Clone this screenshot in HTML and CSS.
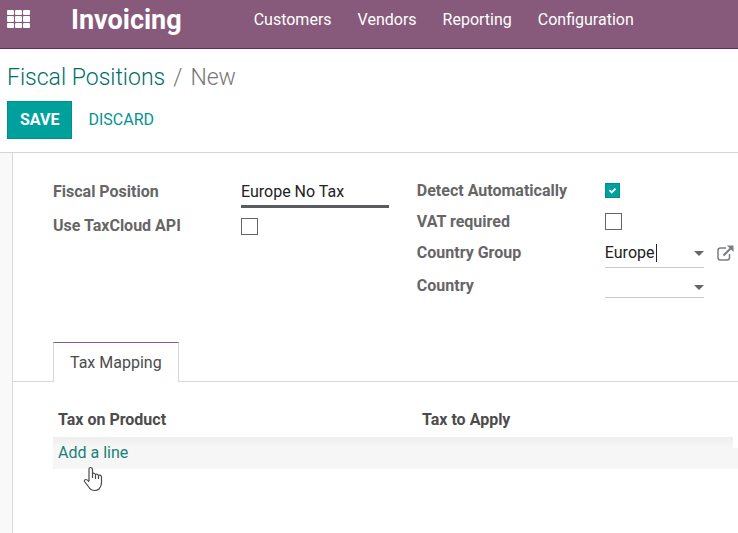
FILE: index.html
```
<!DOCTYPE html>
<html lang="en">
<head>
<meta charset="utf-8">
<title>Invoicing - Fiscal Positions</title>
<link rel="stylesheet" href="styles.css">
</head>
<body>
<header class="navbar">
  <button class="apps" type="button" aria-label="Applications">
    <svg width="24" height="20" viewBox="0 0 24 20" fill="currentColor">
      <rect x="0" y="0" width="7" height="5" rx="1"/><rect x="8" y="0" width="7" height="5" rx="1"/><rect x="16" y="0" width="7" height="5" rx="1"/>
      <rect x="0" y="6" width="7" height="6" rx="1"/><rect x="8" y="6" width="7" height="6" rx="1"/><rect x="16" y="6" width="7" height="6" rx="1"/>
      <rect x="0" y="13" width="7" height="5" rx="1"/><rect x="8" y="13" width="7" height="5" rx="1"/><rect x="16" y="13" width="7" height="5" rx="1"/>
    </svg>
  </button>
  <a class="brand" href="#">Invoicing</a>
  <nav class="menu">
    <a href="#">Customers</a>
    <a href="#">Vendors</a>
    <a href="#">Reporting</a>
    <a href="#">Configuration</a>
  </nav>
</header>
<section class="control-panel">
  <div class="breadcrumb"><a href="#">Fiscal Positions</a><span class="slash">/</span><span class="current">New</span></div>
  <div class="actions">
    <button class="btn save" type="button">SAVE</button>
    <button class="btn discard" type="button">DISCARD</button>
  </div>
</section>
<main class="content">
  <div class="sheet">
    <form class="groups">
      <div class="group">
        <div class="row">
          <label for="name">Fiscal Position</label>
          <input class="text" id="name" type="text" value="Europe No Tax">
        </div>
        <div class="row last">
          <label for="taxcloud">Use TaxCloud API</label>
          <input class="check" id="taxcloud" type="checkbox">
        </div>
      </div>
      <div class="group">
        <div class="row">
          <label for="auto">Detect Automatically</label>
          <span class="checked"><input class="check" id="auto" type="checkbox" checked><svg class="tick" width="15" height="15" viewBox="0 0 15 15"><path d="M4.500 7.200l2.200 2.200 3.800-3.800" fill="none" stroke="#fff" stroke-width="1.800"/></svg></span>
        </div>
        <div class="row">
          <label for="vat">VAT required</label>
          <input class="check" id="vat" type="checkbox">
        </div>
        <div class="row">
          <label for="cgroup">Country Group</label>
          <div class="field">
            <div class="combo">
              <select id="cgroup"><option>Europe</option></select>
              <span class="caret"></span>
              <svg class="arrow" width="10" height="5" viewBox="0 0 10 5"><path d="M0 0h10L5 5z" fill="#666"/></svg>
            </div>
            <a class="external" href="#" aria-label="Open country group">
              <svg width="17" height="16" viewBox="0 0 17 16" fill="none" stroke="#7a7f83">
                <path d="M9 3H3.500Q1 3 1 5.500V12.500Q1 15 3.500 15H10Q12.500 15 12.500 12.500V9" stroke-width="1.500"/>
                <path d="M6.500 10.500L14 3" stroke-width="2.200"/>
                <path d="M10 0.500h6.500V7z" fill="#7a7f83" stroke="none"/>
              </svg>
            </a>
          </div>
        </div>
        <div class="row last">
          <label for="country">Country</label>
          <div class="field">
            <div class="combo short">
              <select id="country"><option></option></select>
              <svg class="arrow" width="10" height="5" viewBox="0 0 10 5"><path d="M0 0h10L5 5z" fill="#666"/></svg>
            </div>
          </div>
        </div>
      </div>
    </form>
    <div class="tabs"><button class="tab" type="button">Tax Mapping</button></div>
    <div class="page">
      <table class="lines">
        <thead><tr><th>Tax on Product</th><th>Tax to Apply</th></tr></thead>
        <tbody><tr><td colspan="2"><a href="#">Add a line</a></td></tr></tbody>
      </table>
      <svg class="pointer" width="20" height="26" viewBox="0 0 20 26"><path d="M6 15V3.500Q6 1.500 7.500 1.500T9.500 3.500V10V7.500Q11 6.500 12.500 8.500Q14.500 7.500 15.500 9.500Q18 8.500 18.500 11V17Q18.500 20 16 23Q14.500 24.500 11.500 24.500Q8 24.500 6.500 22L1.500 15.500Q1 13.500 3 13.500Q4.500 13.500 6 16M9.500 8V12M12.500 8.500V13M15.500 9.500V13" fill="#fff" stroke="#4a4a4a" stroke-width="1.200" stroke-linejoin="round"/></svg>
    </div>
  </div>
</main>
</body>
</html>
```
FILE: styles.css
```
* { box-sizing: border-box; }
body {
  margin: 0;
  min-height: 100vh;
  display: flex;
  flex-direction: column;
  background: #fff;
  color: #4c4c4c;
  font: 16px/20px Roboto, sans-serif;
}
a { color: inherit; text-decoration: none; }
button, input, select { font: inherit; color: inherit; margin: 0; padding: 0; }

.navbar {
  display: flex;
  align-items: center;
  height: 49px;
  padding: 0 7px 8px;
  background: #875a7b;
  border-bottom: 1px solid #5f2f55;
  color: #fff;
}
.apps { display: flex; width: 24px; border: 0; background: none; color: #fff; }
.brand { margin-left: 40px; font-size: 27px; line-height: 32px; font-weight: 700; }
.menu { display: flex; gap: 26px; margin-left: 72px; }

.control-panel { padding: 15px 7px 13px; border-bottom: 1px solid #d5d5d5; }
.breadcrumb { font-size: 23px; line-height: 28px; color: #777; font-weight: 300; }
.breadcrumb a { color: #006f6c; }
.slash { margin: 0 8px; }
.current { color: #777; }
.actions { display: flex; gap: 3px; margin-top: 9px; }
.btn { height: 38px; padding: 0 12px; border: 1px solid transparent; background: none; }
.save { background: #00a09d; border-color: #008f8c; color: #fff; font-weight: 700; }
.discard { color: #009591; }

.content { flex: 1; display: flex; padding-left: 12px; background: #f9f9f9; }
.sheet { flex: 1; background: #fff; border-left: 1px solid #d5d9d9; }
.groups {
  display: grid;
  grid-template-columns: 18fr 17fr;
  gap: 28px;
  padding: 22px 4px 0 40px;
}
.row { display: grid; grid-template-columns: 188px 1fr; align-items: center; min-height: 31px; }
.row.last { min-height: 36px; }
label { font-weight: 700; color: #666; }
.text {
  width: 100%;
  height: 33px;
  padding-top: 2px;
  border: 0;
  border-bottom: 3px solid #5a5b60;
  background: none;
  color: #222;
}
.check {
  appearance: none;
  display: block;
  width: 17px;
  height: 17px;
  border: 1px solid #666;
  background: #fff;
}
.checked { position: relative; }
.check:checked { width: 15px; height: 15px; border-color: #008f8c; background: #00a09d; }
.tick { position: absolute; left: 0; top: 0; pointer-events: none; }
.field { display: grid; grid-template-columns: 1fr 17px; gap: 13px; align-items: center; }
.combo { position: relative; height: 30px; border-bottom: 1px solid #ccc; color: #222; }
.combo.short { height: 24px; }
.combo select { appearance: none; width: 100%; height: 100%; padding-top: 2px; border: 0; background: none; }
.arrow { position: absolute; right: 0; top: calc(50% - 1px); pointer-events: none; }
.caret { position: absolute; left: 51px; top: 6px; width: 1px; height: 18px; background: #222; }
.external { display: flex; }

.tabs { display: flex; margin-top: 38px; padding-left: 40px; border-bottom: 1px solid #d5d9d9; }
.tab {
  height: 40px;
  margin-bottom: -1px;
  padding: 0 16px;
  border: 1px solid #d5d9d9;
  border-top-color: #875a7b;
  border-bottom: 0;
  background: #fff;
}
.page { position: relative; padding: 20px 0 0 40px; }
.lines { width: 100%; border-collapse: collapse; table-layout: fixed; }
.lines th { height: 35px; padding: 0 5px; text-align: left; font-weight: 700; }
.lines th:first-child { width: 364px; }
.lines td {
  height: 32px;
  padding: 0 5px;
  background:
    linear-gradient(#fff, #fff) right top / 5px 11px no-repeat,
    linear-gradient(#eee, #f6f6f6 10px);
}
.lines td a { color: #1a8078; }
.pointer { position: absolute; left: 70px; top: 84px; }
```
